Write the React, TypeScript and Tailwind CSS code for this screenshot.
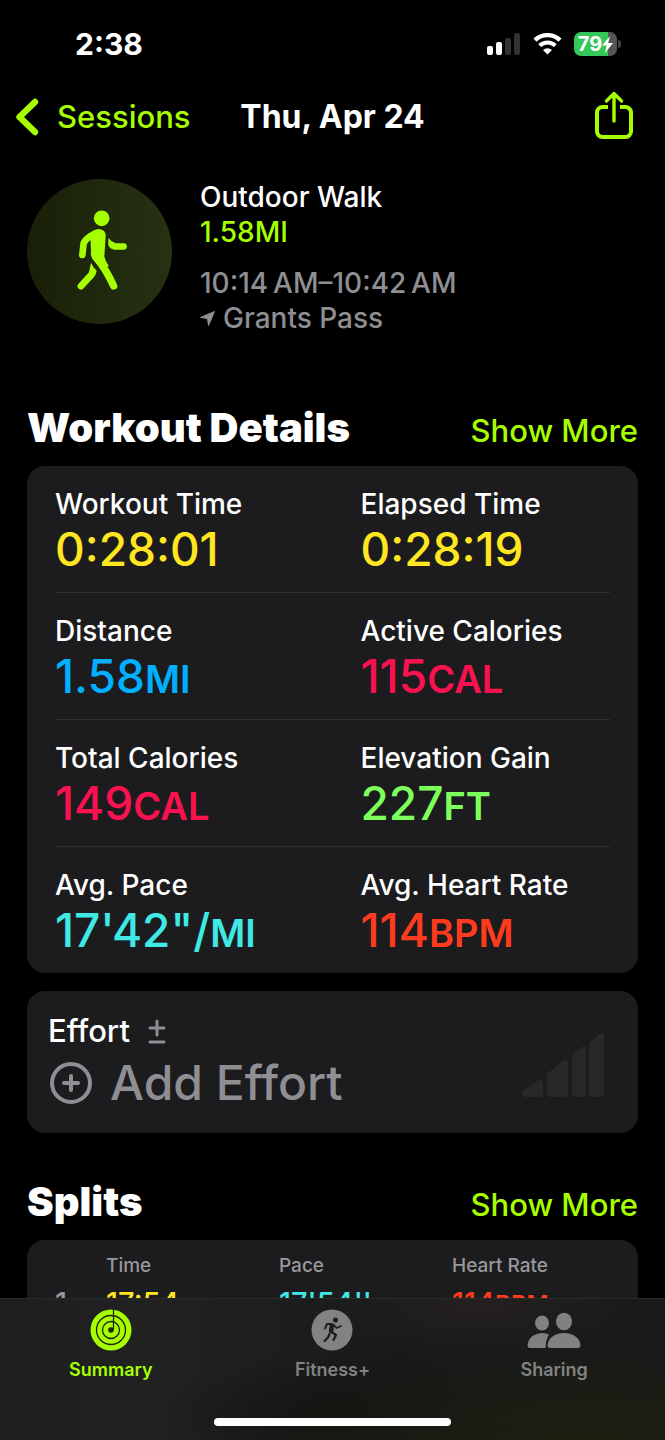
const stats = [
  { label: "Workout Time", value: "0:28:01", unit: "", color: "text-[#ffe620]" },
  { label: "Elapsed Time", value: "0:28:19", unit: "", color: "text-[#ffe620]" },
  { label: "Distance", value: "1.58", unit: "MI", color: "text-[#00b0ff]" },
  { label: "Active Calories", value: "115", unit: "CAL", color: "text-[#fa114f]" },
  { label: "Total Calories", value: "149", unit: "CAL", color: "text-[#fa114f]" },
  { label: "Elevation Gain", value: "227", unit: "FT", color: "text-[#7dff5c]" },
  { label: "Avg. Pace", value: "17'42\"/", unit: "MI", color: "text-[#3fe9e6]" },
  { label: "Avg. Heart Rate", value: "114", unit: "BPM", color: "text-[#ff3b1f]" },
];

const statRows = [0, 2, 4, 6].map((i) => stats.slice(i, i + 2));

function StatusBar() {
  return (
    <div className="flex h-[88px] shrink-0 items-center justify-between pr-11 pl-[75px] text-white">
      <time className="text-[30px] leading-9 font-bold">2:38</time>
      <div className="flex items-center gap-3">
        <svg width="34" height="22" viewBox="0 0 34 22" aria-label="Signal">
          <rect x="0" y="13" width="6" height="9" rx="2" fill="#fff" />
          <rect x="9" y="9" width="6" height="13" rx="2" fill="#fff" />
          <rect x="18" y="5" width="6" height="17" rx="2" fill="#333" />
          <rect x="27" y="0" width="6" height="22" rx="2" fill="#333" />
        </svg>
        <svg width="29" height="22" viewBox="0 0 29 22" fill="none" aria-label="Wi-Fi">
          <path d="M2 7.2a18 18 0 0 1 25 0" stroke="#fff" strokeWidth="4.4" />
          <path d="M6.7 12.6a11.2 11.2 0 0 1 15.6 0" stroke="#fff" strokeWidth="4" />
          <path d="M10 17a6.6 6.6 0 0 1 9 0l-4.5 4.6z" fill="#fff" />
        </svg>
        <div className="flex items-center gap-px" aria-label="Battery">
          <div className="flex h-6 w-[43px] items-center justify-center rounded-[7px] bg-linear-to-r from-[#34c759] from-79% to-[#555] to-79%">
            <span className="text-[20px] leading-6 font-bold">79</span>
            <svg width="11" height="17" viewBox="0 0 11 17" fill="#fff">
              <path d="M8 0 0 9.5h4.6L3 17l8-10H6.2z" />
            </svg>
          </div>
          <div className="h-2 w-[3px] rounded-r-full bg-[#444]" />
        </div>
      </div>
    </div>
  );
}

function Header() {
  return (
    <header className="grid h-[58px] shrink-0 grid-cols-[1fr_auto_1fr] items-center px-4">
      <a href="#sessions" className="flex items-center gap-[18px] text-[31px] leading-9 font-medium text-[#a6ff00]">
        <svg width="23" height="38" viewBox="0 0 23 38" fill="none">
          <path d="M19 4 3.5 19 19 34" stroke="currentColor" strokeWidth="6.4" strokeLinecap="round" strokeLinejoin="round" />
        </svg>
        Sessions
      </a>
      <h1 className="text-[32px] leading-9 font-bold text-white">Thu, Apr 24</h1>
      <button type="button" aria-label="Share" className="mr-4 mb-1 justify-self-end text-[#a6ff00]">
        <svg width="38" height="48" viewBox="0 0 38 48" fill="none" stroke="currentColor" strokeWidth="4" strokeLinecap="round" strokeLinejoin="round">
          <path d="M13 16H7.5a5.5 5.5 0 0 0-5.5 5.5v19a5.5 5.500 0 0 0 5.500 5.500h23a5.500 5.500 0 0 0 5.500-5.500v-19a5.500 5.500 0 0 0-5.500-5.500H25" strokeLinecap="butt" />
          <path d="M19 30V3M11.5 10 19 2.5 26.5 10" strokeWidth="3.4" />
        </svg>
      </button>
    </header>
  );
}

function WalkIcon() {
  return (
    <svg width="55" height="83" viewBox="217 151 165 249" fill="none" stroke="#a6ff00" strokeLinecap="round" strokeLinejoin="round">
      <circle cx="306" cy="176" r="23.5" fill="#a6ff00" stroke="none" />
      <path d="M272 228Q280 208 298 208 319 210 318 230L314 290Q316 304 328 320L306 324 278 296Q272 288 274 276Z" fill="#a6ff00" stroke="none" />
      <path d="M288 221Q260 234 252 250L248 286" strokeWidth="20" />
      <path d="M288 292Q318 326 342 379" strokeWidth="22" />
      <path d="M274 309Q281 324 291 333 290 344 283 352L252 386A10 10 0 0 1 236 373L268 338Z" fill="#a6ff00" stroke="none" />
      <path d="M326 235Q336 248 348 251L372 251A9.5 9.5 0 0 1 372 270L344 270Q330 268 326 256Z" fill="#a6ff00" stroke="none" />
    </svg>
  );
}

function WorkoutSummary() {
  return (
    <section className="flex gap-7 pt-[34px] text-[28px] leading-[35px] font-medium">
      <div className="-mt-px flex size-[145px] items-center justify-center rounded-full bg-linear-to-r from-[#191f08] to-[#263212]">
        <WalkIcon />
      </div>
      <div>
        <p className="text-white">Outdoor Walk</p>
        <p className="text-[#a6ff00]">1.58MI</p>
        <div className="pt-4 text-[#8e8e93]">
          <p>10:14&#8201;AM–10:42&#8201;AM</p>
          <p className="flex items-center gap-2">
            <svg width="15" height="15" viewBox="0 0 15 15" fill="currentColor">
              <path d="M14.5.5 8.5 14.5 7.5 7.5.5 6.5z" stroke="currentColor" strokeLinejoin="round" />
            </svg>
            Grants Pass
          </p>
        </div>
      </div>
    </section>
  );
}

function SectionTitle({ title }: { title: string }) {
  return (
    <div className="flex items-baseline justify-between pb-[14px]">
      <h2 className="text-[40px] leading-[48px] font-black text-white">{title}</h2>
      <a href="#more" className="text-[31px] leading-9 font-medium text-[#a6ff00]">
        Show More
      </a>
    </div>
  );
}

function DetailsCard() {
  return (
    <div className="divide-y divide-[#303033] rounded-[18px] bg-[#1c1c1e] px-7">
      {statRows.map((row) => (
        <dl key={row[0].label} className="grid grid-cols-2 gap-14 pt-[21px] pb-[15px]">
          {row.map((stat) => (
            <div key={stat.label}>
              <dt className="text-[28px] leading-[34px] font-medium whitespace-nowrap text-white">{stat.label}</dt>
              <dd className={`text-[46px] leading-[56px] font-medium whitespace-nowrap ${stat.color}`}>
                {stat.value}
                {stat.unit && <span className="text-[38px] leading-none font-semibold">{stat.unit}</span>}
              </dd>
            </div>
          ))}
        </dl>
      ))}
    </div>
  );
}

function EffortCard() {
  return (
    <section className="mt-[18px] flex items-center justify-between rounded-[18px] bg-[#1c1c1e] pt-[22px] pr-[34px] pb-4 pl-[21px]">
      <div>
        <h3 className="flex items-center gap-[18px] text-[31px] leading-9 font-medium text-white">
          Effort
          <svg width="18" height="26" viewBox="0 0 18 26" fill="none" stroke="#8e8e93" strokeWidth="3" strokeLinecap="round">
            <path d="M2 10h14M9 3v14M2 24h14" />
          </svg>
        </h3>
        <button type="button" className="flex items-center gap-4 pl-0.5 text-[48px] leading-[68px] font-medium text-[#8e8e93]">
          <svg width="44" height="44" viewBox="0 0 44 44" fill="none" stroke="currentColor" strokeWidth="4" strokeLinecap="round">
            <circle cx="21" cy="22" r="19" />
            <path d="M21 15v14M14 22h14" />
          </svg>
          Add Effort
        </button>
      </div>
      <svg width="83" height="64" viewBox="0 0 83 64" fill="#28282a">
        <path d="M2 58 18 47q4-2 4 2v12q0 3-3 3H4q-5-2-2-6zM26 43q0-2 2-4l14-11q5-3 5 2v31q0 3-3 3H29q-3 0-3-3zM51 24q0-3 2-4l8-6q4-2 4 2v45q0 3-3 3h-8q-3 0-3-3zM68 12q0-3 2-4l9-7q4-2 4 3v57q0 3-3 3h-9q-3 0-3-3z" />
      </svg>
    </section>
  );
}

function SplitsTable() {
  return (
    <div className="rounded-[18px] bg-[#1c1c1e] px-7 pt-[10px] pb-6">
      <table className="w-full table-fixed text-left whitespace-nowrap">
        <thead>
          <tr className="text-[19px] leading-8 text-[#98989d]">
            <th className="w-[51px]" aria-label="Split" />
            <th className="w-[173px] font-medium">Time</th>
            <th className="w-[173px] font-medium">Pace</th>
            <th className="font-medium">Heart Rate</th>
          </tr>
        </thead>
        <tbody>
          <tr className="text-[29px] leading-[42px] font-medium">
            <td className="text-[#98989d]">1</td>
            <td className="text-[#ffe620]">17:54</td>
            <td className="text-[#3fe9e6]">17'54''</td>
            <td className="text-[#ff3b1f]">
              114<span className="text-[24px] leading-none font-semibold">BPM</span>
            </td>
          </tr>
        </tbody>
      </table>
    </div>
  );
}

function RingsIcon() {
  return (
    <svg width="42" height="42" viewBox="0 0 42 42" fill="none" stroke="#1f2310">
      <circle cx="21" cy="21" r="20.5" fill="#a6ff00" stroke="none" />
      <circle cx="21" cy="21" r="14.5" strokeWidth="1.3" />
      <circle cx="21" cy="21" r="8.5" strokeWidth="1.3" />
      <circle cx="21" cy="21" r="2.8" fill="#1f2310" stroke="none" />
      <path d="M23.5 0v20" strokeWidth="1.3" />
    </svg>
  );
}

function RunnerIcon() {
  return (
    <svg width="42" height="42" viewBox="0 0 42 42" fill="none" stroke="#1d1d1d" strokeLinecap="round" strokeLinejoin="round">
      <circle cx="21" cy="21" r="20.5" fill="#828282" stroke="none" />
      <circle cx="24.5" cy="11" r="2.5" fill="#1d1d1d" stroke="none" />
      <path d="M21 16.5 20 22" strokeWidth="4.4" />
      <path d="M20 15h-4L14 19.500M23 16l2.500 3 4.500-2" strokeWidth="1.9" />
      <path d="M20.500 23l4.500 3-2.500 5M18.500 25 17 28.500 13.500 32" strokeWidth="2.2" />
    </svg>
  );
}

function PeopleIcon() {
  return (
    <svg width="54" height="42" viewBox="0 0 54 42" fill="#828080">
      <ellipse cx="15" cy="14" rx="7" ry="7.5" />
      <path d="M22 25.5Q18.5 31 18.7 39H3Q.5 39 .5 36 2 25 15 24q4 0 7 1.5z" />
      <ellipse cx="37" cy="12.5" rx="8" ry="8.8" />
      <path d="M37 24c10 0 16 6 16.5 12q0 3-3 3h-27q-3 0-3-3C21 30 27 24 37 24z" />
    </svg>
  );
}

const tabs = [
  { label: "Summary", icon: <RingsIcon />, color: "text-[#a6ff00]" },
  { label: "Fitness+", icon: <RunnerIcon />, color: "text-[#828282]" },
  { label: "Sharing", icon: <PeopleIcon />, color: "text-[#828282]" },
];

function TabBar() {
  return (
    <nav className="flex h-[142px] shrink-0 flex-col items-center justify-between border-t border-[#2a2a2a] bg-[#1a1a1a] bg-[radial-gradient(ellipse_at_88%_100%,#1b2010_0%,transparent_45%),radial-gradient(ellipse_at_72%_5%,#252020_0%,transparent_25%),radial-gradient(ellipse_at_53%_85%,#121212_0%,transparent_40%),linear-gradient(90deg,#1f1f1f_0%,#212121_25%,#181a1a_60%,#1a1a19_100%)] pt-[10px] pb-[14px]">
      <div className="grid w-full grid-cols-3">
        {tabs.map((tab) => (
          <a key={tab.label} href={`#${tab.label}`} className={`flex flex-col items-center gap-[7px] text-[18px] leading-6 font-semibold ${tab.color}`}>
            {tab.icon}
            {tab.label}
          </a>
        ))}
      </div>
      <div className="h-2 w-[237px] rounded-full bg-white" />
    </nav>
  );
}

export default function App() {
  return (
    <div className="flex h-screen flex-col bg-black font-['Inter',sans-serif]">
      <StatusBar />
      <Header />
      <main className="min-h-0 flex-1 overflow-y-auto px-[27px] [scrollbar-width:none]">
        <WorkoutSummary />
        <section className="pt-[68px]">
          <SectionTitle title="Workout Details" />
          <DetailsCard />
        </section>
        <EffortCard />
        <section className="pt-[45px]">
          <SectionTitle title="Splits" />
          <SplitsTable />
        </section>
      </main>
      <TabBar />
    </div>
  );
}
